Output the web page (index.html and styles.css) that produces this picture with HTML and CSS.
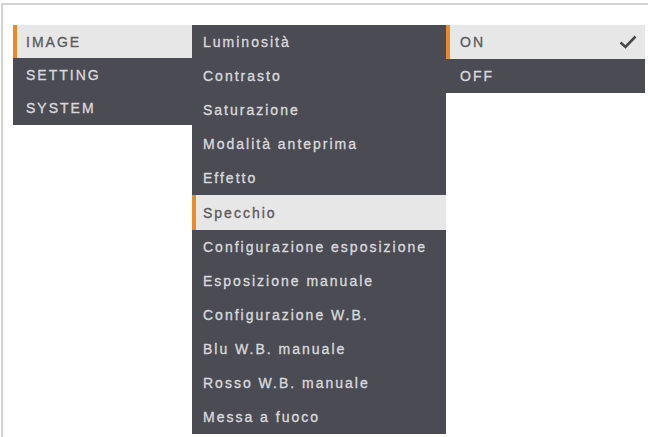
FILE: index.html
```html
<!DOCTYPE html>
<html lang="it">
<head>
<meta charset="utf-8">
<title>Menu</title>
<link rel="stylesheet" href="styles.css">
</head>
<body>
<div class="frame">
  <div class="menus">
    <ul class="menu menu-main">
      <li class="item active">IMAGE</li>
      <li class="item">SETTING</li>
      <li class="item">SYSTEM</li>
    </ul>
    <ul class="menu menu-sub">
      <li class="item">Luminosità</li>
      <li class="item">Contrasto</li>
      <li class="item">Saturazione</li>
      <li class="item">Modalità anteprima</li>
      <li class="item">Effetto</li>
      <li class="item active">Specchio</li>
      <li class="item">Configurazione esposizione</li>
      <li class="item">Esposizione manuale</li>
      <li class="item">Configurazione W.B.</li>
      <li class="item">Blu W.B. manuale</li>
      <li class="item">Rosso W.B. manuale</li>
      <li class="item">Messa a fuoco</li>
    </ul>
    <ul class="menu menu-opt">
      <li class="item active"><span>ON</span>
        <svg class="check" width="18" height="14" viewBox="0 0 18 14" aria-hidden="true"><path d="M1.5 7.5 L6.5 12 L16.5 1.5" fill="none" stroke="#4a4a4a" stroke-width="2.6" stroke-linejoin="miter"/></svg>
      </li>
      <li class="item">OFF</li>
    </ul>
  </div>
</div>
</body>
</html>
```

FILE: styles.css
```css
html, body {
  margin: 0;
  padding: 0;
  background: #ffffff;
}

body {
  width: 648px;
  height: 437px;
  overflow: hidden;
  font-family: "Liberation Sans", Arial, sans-serif;
}

.frame {
  margin: 3px 0 0 1px;
  height: 434px;
  border-top: 2px solid #d4d4d4;
  border-left: 2px solid #d4d4d4;
  box-sizing: border-box;
  padding: 20px 0 0 10px;
}

.menus {
  display: flex;
  align-items: flex-start;
}

.menu {
  list-style: none;
  margin: 0;
  padding: 0;
  background: #4a4b53;
}

.item {
  display: flex;
  align-items: center;
  box-sizing: border-box;
  font-size: 14px;
  letter-spacing: 2px;
  -webkit-text-stroke: 0.35px currentColor;
  color: #d8d8da;
  white-space: nowrap;
  border-left: 4px solid transparent;
}

.item.active {
  background: #e7e7e7;
  color: #5c5c60;
  border-left-color: #e98a2e;
}

.menu-main {
  width: 179px;
}

.menu-main .item {
  height: 33.33px;
  padding-left: 9px;
}

.menu-sub {
  width: 254px;
}

.menu-sub .item {
  height: 34.1px;
  padding-left: 7px;
}

.menu-opt {
  width: 199px;
}

.menu-opt .item {
  height: 34px;
  padding-left: 10px;
  padding-right: 8px;
  justify-content: space-between;
}

.check {
  display: block;
}
```
